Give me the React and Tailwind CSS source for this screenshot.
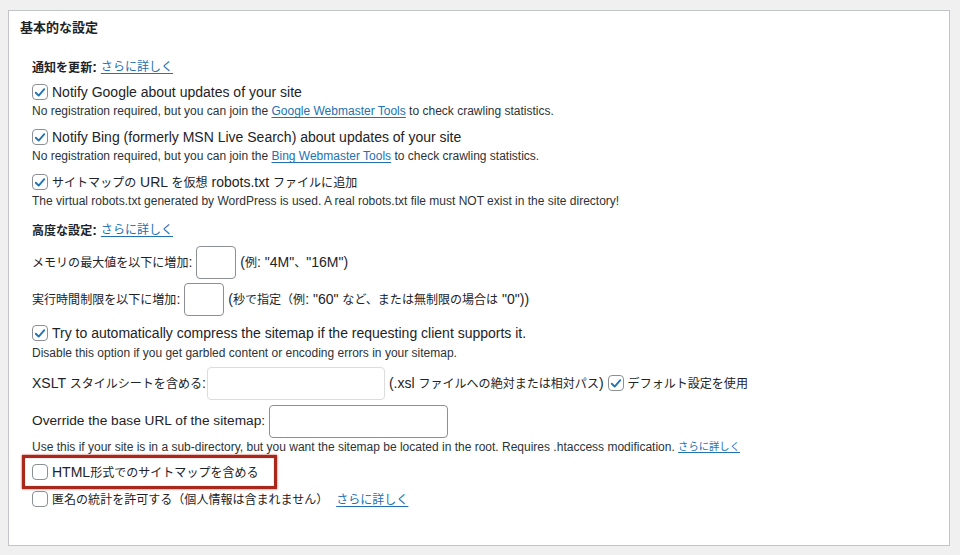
const font = { fontFamily: '"Liberation Sans", "Noto Sans CJK JP", sans-serif' };

// CJK runs are set a bit smaller than the Latin text around them, as in the screenshot
function mix(text) {
  return text.split(/([\u3000-\u30ff\u4e00-\u9fff\uff00-\uffef]+)/).map((part, i) =>
    i % 2 === 1 ? <span key={i} className="text-[0.86em]">{part}</span> : part
  );
}

function Check({ checked }) {
  return (
    <span className="w-4 h-4 shrink-0 border border-[#8c8f94] rounded-[4px] bg-white flex items-center justify-center">
      {checked && (
        <svg viewBox="0 0 16 16" className="w-[15px] h-[15px]">
          <path d="M3.2 8.3 L6.5 11.6 L12.9 4.2" fill="none" stroke="#2271b1" strokeWidth="2.1" strokeLinecap="round" strokeLinejoin="round" />
        </svg>
      )}
    </span>
  );
}

function Link({ children }) {
  return <a href="#" className="text-[#2271b1] underline underline-offset-2 text-[0.86em]">{children}</a>;
}

function CheckRow({ checked, children, className = '' }) {
  return (
    <div className={`h-5 flex items-center gap-1 text-[14px] text-[#1d2327] whitespace-nowrap ${className}`}>
      <Check checked={checked} />
      <span>{children}</span>
    </div>
  );
}

function Desc({ children, className = '' }) {
  return <div className={`h-4 flex items-center text-[12px] text-[#2c3338] whitespace-nowrap ${className}`}>{children}</div>;
}

function Field({ width, light, className = '' }) {
  return (
    <input
      className={`${width} h-[33px] mx-1 border rounded-[4px] bg-white ${light ? 'border-[#dcdcde]' : 'border-[#8c8f94]'} ${className}`}
    />
  );
}

export default function App() {
  return (
    <div className="w-[960px] h-[555px] bg-[#f0f0f1] pt-[10px] pl-[8px] pr-[10px] overflow-hidden" style={font}>
      <div className="h-[536px] bg-white border border-[#c3c4c7]">
        <div className="h-[34px] flex items-center pl-[11px] text-[13px] font-bold text-[#1d2327]">基本的な設定</div>

        <div className="pl-[23px]">
          <div className="h-5 mt-[12px] flex items-center text-[14px] text-[#1d2327]">
            <span className="font-bold mr-1">{mix('通知を更新')}:</span>
            <Link>さらに詳しく</Link>
          </div>

          <CheckRow checked className="mt-[5px]">Notify Google about updates of your site</CheckRow>
          <Desc className="mt-[1px]">
            No registration required, but you can join the&nbsp;<a href="#" className="text-[#2271b1] underline underline-offset-2">Google Webmaster Tools</a>&nbsp;to check crawling statistics.
          </Desc>

          <CheckRow checked className="mt-[8px]">Notify Bing (formerly MSN Live Search) about updates of your site</CheckRow>
          <Desc className="mt-[1px]">
            No registration required, but you can join the&nbsp;<a href="#" className="text-[#2271b1] underline underline-offset-2">Bing Webmaster Tools</a>&nbsp;to check crawling statistics.
          </Desc>

          <CheckRow checked className="mt-[8px]">{mix('サイトマップの URL を仮想 robots.txt ファイルに追加')}</CheckRow>
          <Desc className="mt-[1px]">
            The virtual robots.txt generated by WordPress is used. A real robots.txt file must NOT exist in the site directory!
          </Desc>

          <div className="h-5 mt-[11px] flex items-center text-[14px] text-[#1d2327]">
            <span className="font-bold mr-1">{mix('高度な設定')}:</span>
            <Link>さらに詳しく</Link>
          </div>

          <div className="h-[34px] mt-[5px] flex items-center text-[14px] text-[#1d2327] whitespace-nowrap">
            <span>{mix('メモリの最大値を以下に増加')}:</span>
            <Field width="w-[40px]" />
            <span>{mix('(例: "4M"、"16M")')}</span>
          </div>

          <div className="h-[34px] mt-[3px] flex items-center text-[14px] text-[#1d2327] whitespace-nowrap">
            <span>{mix('実行時間制限を以下に増加')}:</span>
            <Field width="w-[40px]" />
            <span>{mix('(秒で指定（例: "60" など、または無制限の場合は "0"))')}</span>
          </div>

          <CheckRow checked className="mt-[7px]">Try to automatically compress the sitemap if the requesting client supports it.</CheckRow>
          <Desc className="mt-[2px]">Disable this option if you get garbled content or encoding errors in your sitemap.</Desc>

          <div className="h-[34px] mt-[5px] flex items-center text-[14px] text-[#1d2327] whitespace-nowrap">
            <span>{mix('XSLT スタイルシートを含める')}:</span>
            <Field width="w-[178px]" light className="h-[32px] ml-[1px]" />
            <span className="mr-1">{mix('(.xsl ファイルへの絶対または相対パス)')}</span>
            <Check checked />
            <span className="ml-1">{mix('デフォルト設定を使用')}</span>
          </div>

          <div className="h-[34px] mt-[4px] flex items-center text-[13.7px] text-[#1d2327] whitespace-nowrap">
            <span>Override the base URL of the sitemap:</span>
            <Field width="w-[179px]" />
          </div>

          <Desc className="mt-[1px]">
            Use this if your site is in a sub-directory, but you want the sitemap be located in the root. Requires .htaccess modification.&nbsp;<Link>さらに詳しく</Link>
          </Desc>

          <div className="w-[255px] h-[34px] -ml-[10px] pl-[7px] border-[3px] border-[#a8281c] flex items-center shadow-[0_0_2px_#c0392b,inset_0_0_1px_#c0392b]">
            <CheckRow>{mix('HTML形式でのサイトマップを含める')}</CheckRow>
          </div>

          <CheckRow>
            {mix('匿名の統計を許可する（個人情報は含まれません）')}&nbsp;&nbsp;<Link>さらに詳しく</Link>
          </CheckRow>
        </div>
      </div>
    </div>
  );
}
